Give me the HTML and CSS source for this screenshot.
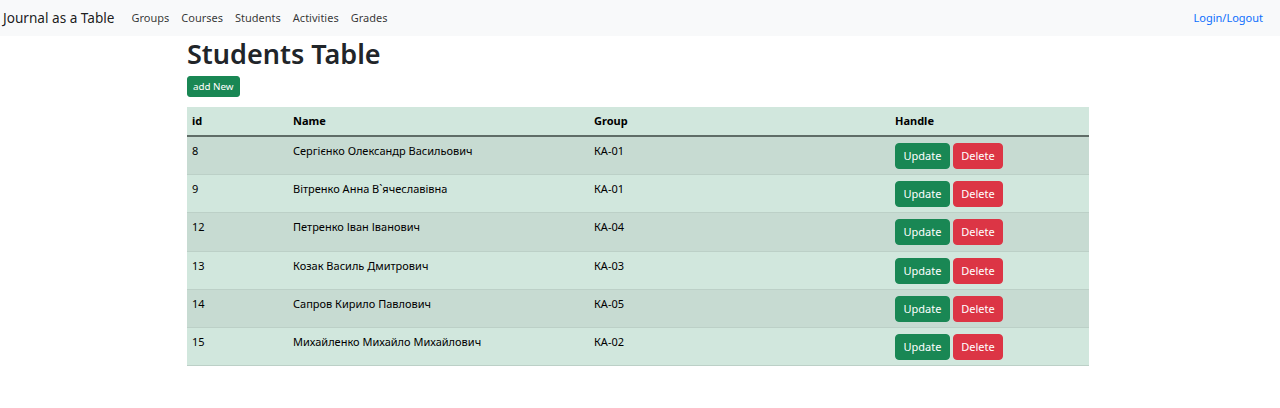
FILE: index.html
```html
<!DOCTYPE html>
<html lang="uk">
<head>
<meta charset="utf-8">
<title>Students Table</title>
<link rel="stylesheet" href="styles.css">
</head>
<body>
<nav class="navbar">
  <a class="brand" href="#">Journal as a Table</a>
  <ul class="nav-links">
    <li><a href="#">Groups</a></li>
    <li><a href="#">Courses</a></li>
    <li><a href="#">Students</a></li>
    <li><a href="#">Activities</a></li>
    <li><a href="#">Grades</a></li>
  </ul>
  <a class="login" href="#">Login/Logout</a>
</nav>
<main class="content">
  <h1 class="title">Students Table</h1>
  <button class="btn btn-sm btn-success">add New</button>
  <table class="table">
    <thead>
      <tr><th class="c-id">id</th><th class="c-name">Name</th><th class="c-group">Group</th><th class="c-handle">Handle</th></tr>
    </thead>
    <tbody>
      <tr><td>8</td><td>Сергієнко Олександр Васильович</td><td>КА-01</td><td><button class="btn btn-success">Update</button> <button class="btn btn-danger">Delete</button></td></tr>
      <tr><td>9</td><td>Вітренко Анна В`ячеславівна</td><td>КА-01</td><td><button class="btn btn-success">Update</button> <button class="btn btn-danger">Delete</button></td></tr>
      <tr><td>12</td><td>Петренко Іван Іванович</td><td>КА-04</td><td><button class="btn btn-success">Update</button> <button class="btn btn-danger">Delete</button></td></tr>
      <tr><td>13</td><td>Козак Василь Дмитрович</td><td>КА-03</td><td><button class="btn btn-success">Update</button> <button class="btn btn-danger">Delete</button></td></tr>
      <tr><td>14</td><td>Сапров Кирило Павлович</td><td>КА-05</td><td><button class="btn btn-success">Update</button> <button class="btn btn-danger">Delete</button></td></tr>
      <tr><td>15</td><td>Михайленко Михайло Михайлович</td><td>КА-02</td><td><button class="btn btn-success">Update</button> <button class="btn btn-danger">Delete</button></td></tr>
    </tbody>
  </table>
</main>
</body>
</html>
```
FILE: styles.css
```css
* { box-sizing: border-box; }
html, body { margin: 0; padding: 0; }
body {
  font-family: "Noto Sans", "Open Sans", sans-serif;
  font-size: 11px;
  line-height: 18px;
  color: #212529;
  background: #fff;
}
a { text-decoration: none; }

.navbar {
  height: 36px;
  background: #f8f9fa;
  display: flex;
  align-items: center;
  padding: 0 17px 1px 3px;
}
.brand {
  font-size: 13.6px;
  color: rgba(0,0,0,.9);
  margin-right: 11px;
}
.nav-links {
  display: flex;
  list-style: none;
  margin: 0;
  padding: 0;
  flex: 1;
}
.nav-links a {
  display: block;
  padding: 0 6px;
  color: rgba(0,0,0,.8);
}
.login { color: #0d6efd; }

.content {
  margin-left: 187px;
  width: 902px;
}
.title {
  font-size: 27px;
  font-weight: 600;
  line-height: 36px;
  margin: 0 0 4px;
}
.btn {
  display: inline-block;
  font-family: inherit;
  font-size: 11px;
  line-height: 18px;
  color: #fff;
  border: 1px solid transparent;
  border-radius: 4px;
  padding: 3px 7.5px;
  cursor: pointer;
}
.btn-sm {
  font-size: 9.8px;
  line-height: 15px;
  padding: 2px 5px;
  border-radius: 3px;
}
.btn-success { background: #198754; border-color: #198754; }
.btn-danger { background: #dc3545; border-color: #dc3545; }

.table {
  width: 100%;
  margin-top: 10px;
  border-collapse: collapse;
  background: #d1e7dd;
  color: #000;
}
.table th, .table td {
  text-align: left;
  vertical-align: top;
  padding: 5px 5px;
  border-bottom: 1px solid #bcd0c7;
}
.table th { font-weight: 700; }
.table thead th { border-bottom: 2px solid #5f6d67; }
.table td { padding: 5px 5px 5.2px; }
.table td:last-child { padding-top: 6px; padding-bottom: 5.2px; }
.table tbody tr:nth-child(odd) td { background: #c7dbd2; }
.c-id { width: 101px; }
.c-name { width: 301px; }
.c-group { width: 301px; }
```
